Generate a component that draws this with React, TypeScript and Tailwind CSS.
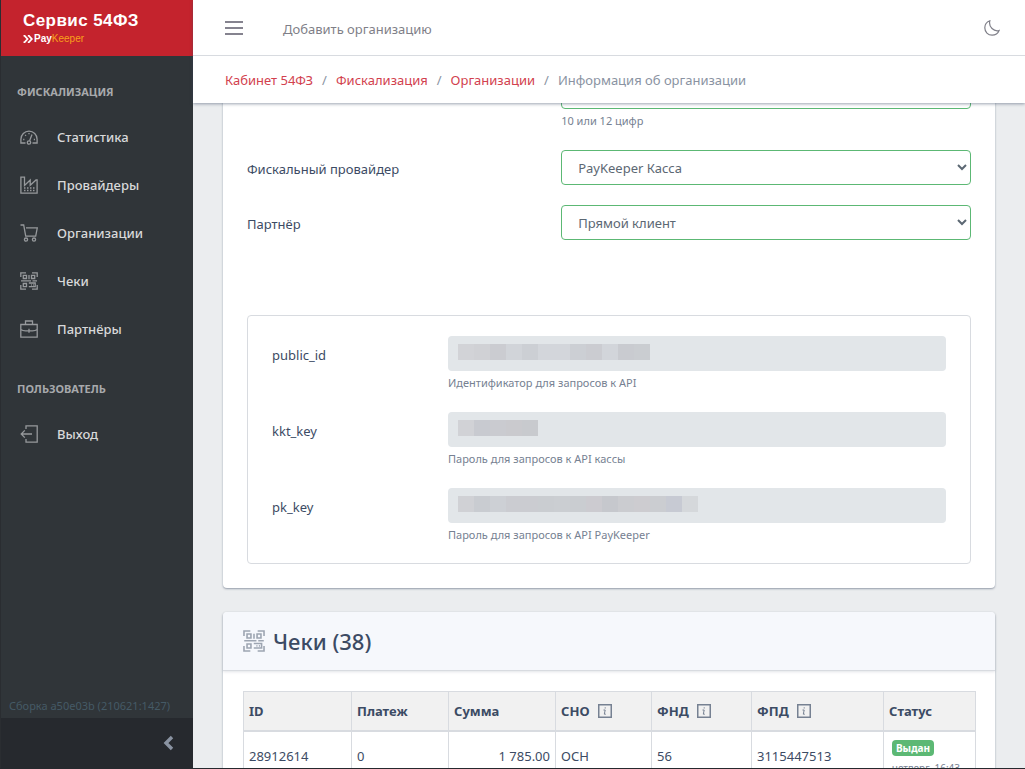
import { ReactNode } from 'react'

const iconPaths: Record<string, ReactNode> = {
  speed: (
    <>
      <path d="M5.500 15H.9v-3.800a8.100 8.100 0 0 1 16.200 0V15h-4.600" />
      <circle cx="9" cy="14.500" r="1.700" />
      <path d="M9.600 12.800 12 6.500M3.200 11.500h1.200M5.200 7l.8.8M9 5v1.200M13.800 11.500H15" />
    </>
  ),
  factory: (
    <>
      <path d="M.9 17.100V1.200h3.600v8.300L10.200 4v5.200L16 4h1.100v13.100z" />
      <path d="M4 12h1.500M7 12h1.500M10 12h1.500M13 12h1.500M4 14.500h1.500M7 14.500h1.500M10 14.500h1.500M13 14.500h1.500" />
    </>
  ),
  cart: (
    <>
      <path d="M.5 1h3.200l2 11.200h10L17.300 3.800H6" />
      <circle cx="6" cy="15.600" r="1.600" />
      <circle cx="14" cy="15.600" r="1.600" />
    </>
  ),
  qr: (
    <>
      <path d="M.8 5V.8H6M12 .8h5.200V5M.8 13v4.200H6M12 17.200h5.200V13" />
      <path d="M3.300 3.300h3.200v3.200H3.300zM11.500 3.300h3.200v3.200h-3.200zM3.300 11.500h3.200v3.200H3.300zM9 3v4.200M1 8.800h10M12.500 8.800H17M8.800 11h6.400v3.700H8.800M11 13h.8M13 13h.8" />
    </>
  ),
  briefcase: (
    <path d="M.8 4.500h16.400v12.700H.8zM5.500 4.500V1h7v3.500M.8 9.500c1.400 1 3 1.300 4.700 1.300h7c1.700 0 3.300-.3 4.700-1.300M9 8.800v4" />
  ),
  exit: <path d="M6 4V.8h11.200v16.400H6V14M12 9H1.200M4.800 5.400 1.200 9l3.600 3.600" />,
}

function Icon({ name, className }: { name: string; className: string }) {
  return (
    <svg viewBox="0 0 18 18" fill="none" stroke="currentColor" strokeWidth="1.3" className={className} aria-hidden="true">
      {iconPaths[name]}
    </svg>
  )
}

const mainNav = [
  { icon: 'speed', label: 'Статистика' },
  { icon: 'factory', label: 'Провайдеры' },
  { icon: 'cart', label: 'Организации' },
  { icon: 'qr', label: 'Чеки' },
  { icon: 'briefcase', label: 'Партнёры' },
]

const userNav = [{ icon: 'exit', label: 'Выход' }]

const keys = [
  {
    id: 'public_id',
    hint: 'Идентификатор для запросов к API',
    mask: ['#d2d3d7', '#d0d1d5', '#cbccd1', '#d1d4d9', '#cccfd4', '#d3d6db', '#d3d6db', '#cccfd4', '#cbccd1', '#d2d5da', '#c9cbd0', '#cacdd1'],
  },
  {
    id: 'kkt_key',
    hint: 'Пароль для запросов к API кассы',
    mask: ['#d1d2d6', '#c8cad0', '#cacbd0', '#cacace', '#c8cace'],
  },
  {
    id: 'pk_key',
    hint: 'Пароль для запросов к API PayKeeper',
    mask: ['#d0d1d5', '#c9ccd1', '#cdd0d5', '#cbccd1', '#cbccd1', '#cacdd1', '#cbced2', '#cacdd1', '#cccbd0', '#c6c8cd', '#cbccd0', '#cdccd0', '#cbcdd1', '#c7cad3', '#d5d8db'],
  },
]

const columns = [
  { label: 'ID', width: 'w-[108px]' },
  { label: 'Платеж', width: 'w-[97px]' },
  { label: 'Сумма', width: 'w-[107px]' },
  { label: 'СНО', width: 'w-[96px]', info: true },
  { label: 'ФНД', width: 'w-[100px]', info: true },
  { label: 'ФПД', width: 'w-[132px]', info: true },
  { label: 'Статус', width: 'w-[92px]' },
]

const crumbs = ['Кабинет 54ФЗ', 'Фискализация', 'Организации']

function NavList({ title, items }: { title: string; items: { icon: string; label: string }[] }) {
  return (
    <>
      <h2 className="mt-4 px-4 pt-3 pb-[13px] text-[11px] leading-4 font-bold uppercase text-[#a7a9ac]">{title}</h2>
      <ul>
        {items.map((item) => (
          <li key={item.label}>
            <a href="#" className="flex h-12 items-center px-[19px] font-medium text-[#d8d9da]">
              <Icon name={item.icon} className="mr-[19px] size-[18px] shrink-0 text-[#96999c]" />
              {item.label}
            </a>
          </li>
        ))}
      </ul>
    </>
  )
}

function Sidebar() {
  return (
    <aside className="flex w-[193px] shrink-0 flex-col border-l border-[#2a2d31] bg-[#303539]">
      <a href="#" className="flex h-14 shrink-0 flex-col gap-0.5 bg-[#c4232d] pt-[11px] pl-[22px] text-white">
        <span className="font-['Liberation_Sans',sans-serif] text-[17px] leading-5 font-bold tracking-wide">Сервис 54ФЗ</span>
        <span className="flex items-center gap-px font-['Liberation_Sans',sans-serif] text-[10px] leading-3 font-bold">
          <svg viewBox="0 0 10 8" className="h-2 w-[10px]" fill="none" stroke="currentColor" strokeWidth="1.8" aria-hidden="true">
            <path d="M.5.7h1L4.500 4l-3 3.300h-1M4.800.7h1L8.800 4l-3 3.300h-1" />
          </svg>
          <span>
            Pay<span className="font-normal text-[#f9a01b]">Keeper</span>
          </span>
        </span>
      </a>
      <nav className="flex-1">
        <NavList title="Фискализация" items={mainNav} />
        <NavList title="Пользователь" items={userNav} />
      </nav>
      <p className="px-2 pb-1 text-[11px] leading-4 text-[#455a66]">Сборка a50e03b (210621:1427)</p>
      <button type="button" aria-label="Свернуть меню" className="flex h-[50px] shrink-0 items-center justify-end bg-[#26292e] pr-[19px] text-[#8a93a2]">
        <svg viewBox="0 0 12 16" className="h-4 w-3" fill="none" stroke="currentColor" strokeWidth="3.4" aria-hidden="true">
          <path d="M10 2 4 8l6 6" />
        </svg>
      </button>
    </aside>
  )
}

function Header() {
  return (
    <header className="relative z-10 shrink-0 bg-white shadow-[0_1px_3px_rgba(60,75,100,0.5)]">
      <div className="flex h-14 items-center border-b border-[#d8dbe0] pr-[25px] pl-8 text-[#7f7f88]">
        <button type="button" aria-label="Меню" className="flex w-[18px] flex-col gap-1">
          <span className="h-0.5 bg-[#85838f]" />
          <span className="h-0.5 bg-[#85838f]" />
          <span className="h-0.5 bg-[#85838f]" />
        </button>
        <a href="#" className="ml-10 pt-0.5">Добавить организацию</a>
        <button type="button" aria-label="Тёмная тема" className="ml-auto">
          <svg viewBox="0 0 16 16" className="size-4" fill="none" stroke="currentColor" strokeWidth="1.2" aria-hidden="true">
            <path d="M5.800.8C2.800 2 .8 4.600.8 7.800c0 4.200 3.200 7.400 7.300 7.400 3.200 0 5.900-1.900 7-4.700C10 12 4.400 7 5.800.8Z" />
          </svg>
        </button>
      </div>
      <nav className="flex h-[47px] items-center gap-[9px] px-8 text-[#8a93a2]">
        {crumbs.map((c) => (
          <span key={c} className="flex gap-[9px]">
            <a href="#" className="text-[#d2414e]">{c}</a>
            <span>/</span>
          </span>
        ))}
        <span>Информация об организации</span>
      </nav>
    </header>
  )
}

function Hint({ children }: { children: ReactNode }) {
  return <p className="mt-[3px] pb-px text-[11px] leading-[17px] text-[#768192]">{children}</p>
}

function SelectRow({ id, label, value }: { id: string; label: string; value: string }) {
  return (
    <div className="-mx-[15px] mb-5 flex">
      <label htmlFor={id} className="w-5/12 px-[15px] pt-[9px]">{label}</label>
      <div className="w-7/12 px-[15px]">
        <select id={id} className="block h-[35px] w-full rounded border border-[#5cb874] bg-white px-3 text-[#5c6873]">
          <option>{value}</option>
        </select>
      </div>
    </div>
  )
}

function OrganizationCard() {
  return (
    <section className="mb-6 rounded bg-white px-6 pb-6 shadow-[0_1px_2px_rgba(60,75,100,0.5)]">
      <div className="-mx-[15px] mb-5 flex justify-end">
        <div className="w-7/12 px-[15px]">
          <input aria-label="ИНН" className="block h-[35px] w-full rounded border border-[#5cb874] px-3" />
          <Hint>10 или 12 цифр</Hint>
        </div>
      </div>
      <SelectRow id="provider" label="Фискальный провайдер" value="PayKeeper Касса" />
      <SelectRow id="partner" label="Партнёр" value="Прямой клиент" />
      <div className="mt-[75px] rounded border border-[#d8dbe0] px-6 pt-5 pb-[19px]">
        <div className="flex flex-col gap-5">
          {keys.map((k) => (
            <div key={k.id} className="-mx-[15px] flex">
              <label htmlFor={k.id} className="w-1/4 px-[15px] pt-[9px]">{k.id}</label>
              <div className="w-3/4 px-[15px]">
                <div className="relative">
                  <input id={k.id} readOnly className="block h-[35px] w-full rounded bg-[#e2e6e9] px-3" />
                  <div className="absolute inset-y-0 left-[10px] flex items-center pb-1">
                    {k.mask.map((color, i) => (
                      <span key={i} className="size-4" style={{ backgroundColor: color }} />
                    ))}
                  </div>
                </div>
                <Hint>{k.hint}</Hint>
              </div>
            </div>
          ))}
        </div>
      </div>
    </section>
  )
}

function InfoIcon() {
  return (
    <svg viewBox="0 0 14 14" className="size-[14px]" fill="none" stroke="#768192" aria-hidden="true">
      <rect x="0.750" y="0.750" width="12.500" height="12.500" strokeWidth="1.500" />
      <path d="M5.500 6h1.700L6.300 10.200h1.500M7.200 3.300v1.200" />
    </svg>
  )
}

function ReceiptsCard() {
  return (
    <section className="rounded bg-white shadow-[0_1px_2px_rgba(60,75,100,0.5)]">
      <div className="flex h-[59px] items-center gap-2 rounded-t border-b border-[#d8dbe0] bg-[#f6f8fc] px-5 shadow-[0_1px_3px_rgba(60,75,100,0.15)]">
        <Icon name="qr" className="size-[22px] text-[#9da5b1]" />
        <h1 className="text-[22px] leading-7 font-medium">Чеки (38)</h1>
      </div>
      <div className="p-5">
        <table className="w-full table-fixed border-collapse [&_td]:border [&_td]:border-[#d8dbe0] [&_td]:px-[5px] [&_th]:border [&_th]:border-[#d8dbe0] [&_th]:px-[5px]">
          <thead>
            <tr className="h-[39px] border-b-2 border-[#d8dbe0] bg-[#f1f1f1] text-left">
              {columns.map((col) => (
                <th key={col.label} className={col.width}>
                  <span className="flex items-center gap-2">
                    {col.label}
                    {col.info && <InfoIcon />}
                  </span>
                </th>
              ))}
            </tr>
          </thead>
          <tbody>
            <tr>
              <td>28912614</td>
              <td>0</td>
              <td className="text-right">1 785.00</td>
              <td>ОСН</td>
              <td>56</td>
              <td>3115447513</td>
              <td>
                <div className="flex flex-col items-start gap-1 pt-2 pb-1 pl-[3px] leading-4">
                  <span className="rounded bg-[#5cb874] px-1 text-[10px] font-bold text-white">Выдан</span>
                  <span className="text-[10px] whitespace-nowrap text-[#768192]">четверг, 16:43</span>
                </div>
              </td>
            </tr>
          </tbody>
        </table>
      </div>
    </section>
  )
}

export default function App() {
  return (
    <div className="flex h-screen overflow-hidden border-b border-[#26292e] bg-[#ebedef] font-['Noto_Sans',sans-serif] text-[13px] leading-5 text-[#3c4b64]">
      <Sidebar />
      <div className="flex min-w-0 flex-1 flex-col">
        <Header />
        <main className="min-h-0 flex-1 overflow-hidden px-[30px]">
          <div className="-mt-[29px]">
            <OrganizationCard />
            <ReceiptsCard />
          </div>
        </main>
      </div>
    </div>
  )
}
